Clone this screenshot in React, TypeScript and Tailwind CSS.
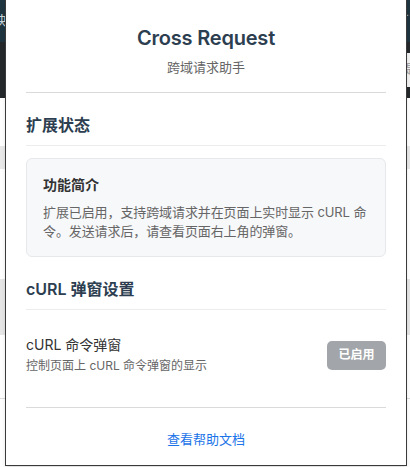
const font = { fontFamily: 'Inter, "Noto Sans CJK SC", "Noto Sans", sans-serif' };

function Backdrop() {
    return (
        <div className="flex flex-col w-full h-full bg-white">
            <div className="h-[42px] bg-[#1f3640] flex items-center justify-between px-0 text-[#c9d3d8] text-[13px]">
                <span className="-ml-[6px]">决</span>
                <span className="text-[10px] tracking-[1px] mb-[18px]">...</span>
            </div>
            <div className="h-[56px] bg-[#26292c] flex items-center justify-end">
                <div className="h-[34px] w-[8px] bg-[#f2f2f2] text-[12px] text-[#999] flex items-center">提</div>
            </div>
            <div className="h-[48px]" />
            <div className="h-[23px] bg-[#e9e9ea]" />
            <div className="h-[110px]" />
            <div className="h-[56px] bg-[#e6e6e6]" />
            <div className="h-[64px] border-b border-[#dcdcdc]" />
        </div>
    );
}

export default function App() {
    return (
        <div className="relative w-[410px] h-[467px] overflow-hidden" style={font}>
            <Backdrop />

            {/* popup */}
            <div className="absolute left-[5px] top-0 w-[402px] h-[466px] bg-white border-x border-b border-[#3a3a3a] shadow-md">
                <div className="px-5">
                    <div className="pt-6 pb-4 text-center border-b border-[#dadada]">
                        <h1 className="text-[20px] leading-[28px] font-semibold tracking-[-0.2px] text-[#2c3e50]">Cross Request</h1>
                        <p className="mt-[6px] text-[13px] leading-[18px] text-[#666]">跨域请求助手</p>
                    </div>

                    <div className="mt-5 pb-2 border-b border-[#ececec]">
                        <h2 className="text-[16px] leading-[24px] font-semibold text-[#2c3e50]">扩展状态</h2>
                    </div>
                    <div className="mt-[12px] rounded-md border border-[#e6e8eb] bg-[#f7f8fa] pl-4 pr-[8px] pt-4 pb-[15px]">
                        <h3 className="text-[14px] leading-[20px] font-semibold text-[#333]">功能简介</h3>
                        <p className="mt-2 text-[13px] leading-[19px] text-[#666] tracking-[-0.1px]">
                            扩展已启用，支持跨域请求并在页面上实时显示 cURL 命令。发送请求后，请查看页面右上角的弹窗。
                        </p>
                    </div>

                    <div className="mt-5 pb-2 border-b border-[#ececec]">
                        <h2 className="text-[16px] leading-[24px] font-semibold text-[#2c3e50]">cURL 弹窗设置</h2>
                    </div>
                    <div className="flex items-center justify-between pt-[25px] pb-[32px]">
                        <div>
                            <div className="text-[14px] leading-[20px] text-[#333]">cURL 命令弹窗</div>
                            <div className="mt-[2px] text-[12px] leading-[18px] text-[#666]">控制页面上 cURL 命令弹窗的显示</div>
                        </div>
                        <button className="h-[29px] w-[59px] rounded-[5px] bg-[#a2a6aa] text-white text-[12px] font-semibold">已启用</button>
                    </div>

                    <div className="border-t border-[#dadada] pt-[18px] text-center">
                        <a href="#" className="text-[13px] leading-[18px] text-[#1a73e8]">查看帮助文档</a>
                    </div>
                </div>
            </div>
        </div>
    );
}
